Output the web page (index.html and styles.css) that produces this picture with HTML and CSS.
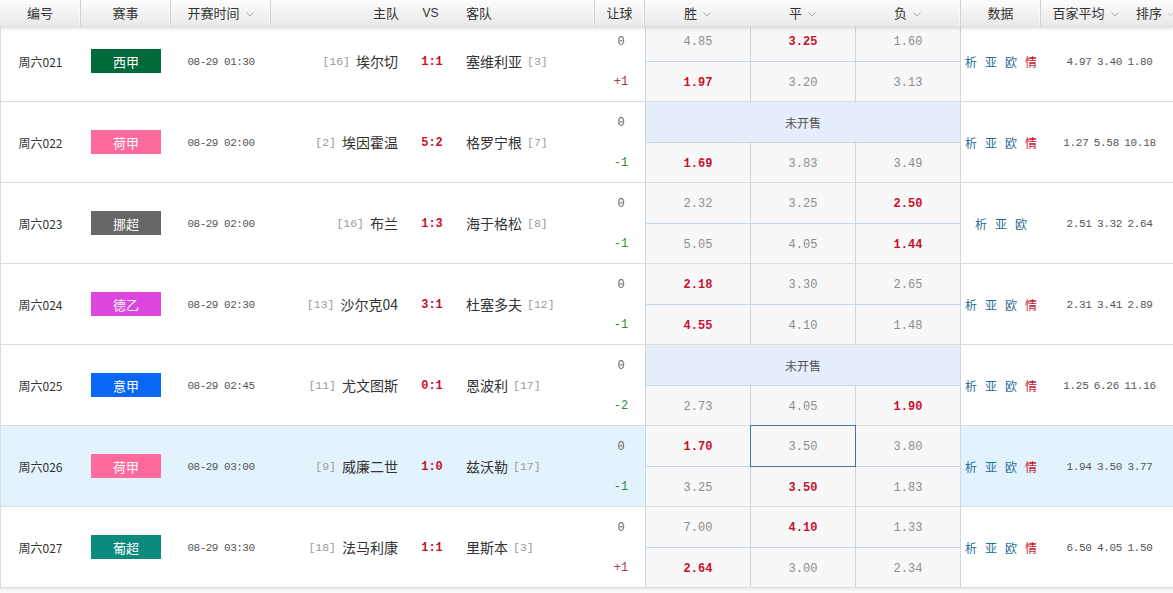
FILE: index.html
```html
<!DOCTYPE html>
<html lang="zh-CN">
<head>
<meta charset="utf-8">
<title>竞彩足球</title>
<link rel="stylesheet" href="styles.css">
</head>
<body>
<div class="table">
  <div class="head">
    <div class="hc sep">编号</div>
    <div class="hc sep">赛事</div>
    <div class="hc sep">开赛时间<svg class="chev" viewBox="0 0 8 5"><polyline points="0.5,0.5 4,4 7.5,0.5"/></svg></div>
    <div class="hc hc-home">主队</div>
    <div class="hc hc-vs">VS</div>
    <div class="hc hc-away sep">客队</div>
    <div class="hc sep">让球</div>
    <div class="hc">胜<svg class="chev" viewBox="0 0 8 5"><polyline points="0.5,0.5 4,4 7.5,0.5"/></svg></div>
    <div class="hc">平<svg class="chev" viewBox="0 0 8 5"><polyline points="0.5,0.5 4,4 7.5,0.5"/></svg></div>
    <div class="hc sep">负<svg class="chev" viewBox="0 0 8 5"><polyline points="0.5,0.5 4,4 7.5,0.5"/></svg></div>
    <div class="hc sep">数据</div>
    <div class="hc">百家平均<svg class="chev" viewBox="0 0 8 5"><polyline points="0.5,0.5 4,4 7.5,0.5"/></svg></div>
    <div class="hc hc-sort">排序<svg class="chev" viewBox="0 0 8 5"><polyline points="0.5,0.5 4,4 7.5,0.5"/></svg></div>
  </div>

  <div class="rows">
    <!-- 021 -->
    <div class="row">
      <div class="c num">周六021</div>
      <div class="c"><span class="badge b-xj">西甲</span></div>
      <div class="c time">08-29 01:30</div>
      <div class="c home"><span class="rank">[16]</span><span class="team">埃尔切</span></div>
      <div class="c score">1:1</div>
      <div class="c away"><span class="team">塞维利亚</span><span class="rank">[3]</span></div>
      <div class="c hcp"><span class="h0">0</span><span class="hp">+1</span></div>
      <div class="odds">
        <div class="o">4.85</div><div class="o hot">3.25</div><div class="o">1.60</div>
        <div class="o hot">1.97</div><div class="o">3.20</div><div class="o">3.13</div>
      </div>
      <div class="c data"><a class="lk">析</a><a class="lk">亚</a><a class="lk">欧</a><a class="lk qing">情</a></div>
      <div class="c avg">4.97 3.40 1.80</div>
    </div>
    <!-- 022 -->
    <div class="row">
      <div class="c num">周六022</div>
      <div class="c"><span class="badge b-hj">荷甲</span></div>
      <div class="c time">08-29 02:00</div>
      <div class="c home"><span class="rank">[2]</span><span class="team">埃因霍温</span></div>
      <div class="c score">5:2</div>
      <div class="c away"><span class="team">格罗宁根</span><span class="rank">[7]</span></div>
      <div class="c hcp"><span class="h0">0</span><span class="hm">-1</span></div>
      <div class="odds">
        <div class="o closed">未开售</div>
        <div class="o hot">1.69</div><div class="o">3.83</div><div class="o">3.49</div>
      </div>
      <div class="c data"><a class="lk">析</a><a class="lk">亚</a><a class="lk">欧</a><a class="lk qing">情</a></div>
      <div class="c avg">1.27 5.58 10.18</div>
    </div>
    <!-- 023 -->
    <div class="row">
      <div class="c num">周六023</div>
      <div class="c"><span class="badge b-nc">挪超</span></div>
      <div class="c time">08-29 02:00</div>
      <div class="c home"><span class="rank">[16]</span><span class="team">布兰</span></div>
      <div class="c score">1:3</div>
      <div class="c away"><span class="team">海于格松</span><span class="rank">[8]</span></div>
      <div class="c hcp"><span class="h0">0</span><span class="hm">-1</span></div>
      <div class="odds">
        <div class="o">2.32</div><div class="o">3.25</div><div class="o hot">2.50</div>
        <div class="o">5.05</div><div class="o">4.05</div><div class="o hot">1.44</div>
      </div>
      <div class="c data"><a class="lk">析</a><a class="lk">亚</a><a class="lk">欧</a></div>
      <div class="c avg">2.51 3.32 2.64</div>
    </div>
    <!-- 024 -->
    <div class="row">
      <div class="c num">周六024</div>
      <div class="c"><span class="badge b-dy">德乙</span></div>
      <div class="c time">08-29 02:30</div>
      <div class="c home"><span class="rank">[13]</span><span class="team">沙尔克04</span></div>
      <div class="c score">3:1</div>
      <div class="c away"><span class="team">杜塞多夫</span><span class="rank">[12]</span></div>
      <div class="c hcp"><span class="h0">0</span><span class="hm">-1</span></div>
      <div class="odds">
        <div class="o hot">2.18</div><div class="o">3.30</div><div class="o">2.65</div>
        <div class="o hot">4.55</div><div class="o">4.10</div><div class="o">1.48</div>
      </div>
      <div class="c data"><a class="lk">析</a><a class="lk">亚</a><a class="lk">欧</a><a class="lk qing">情</a></div>
      <div class="c avg">2.31 3.41 2.89</div>
    </div>
    <!-- 025 -->
    <div class="row">
      <div class="c num">周六025</div>
      <div class="c"><span class="badge b-yj">意甲</span></div>
      <div class="c time">08-29 02:45</div>
      <div class="c home"><span class="rank">[11]</span><span class="team">尤文图斯</span></div>
      <div class="c score">0:1</div>
      <div class="c away"><span class="team">恩波利</span><span class="rank">[17]</span></div>
      <div class="c hcp"><span class="h0">0</span><span class="hm">-2</span></div>
      <div class="odds">
        <div class="o closed">未开售</div>
        <div class="o">2.73</div><div class="o">4.05</div><div class="o hot">1.90</div>
      </div>
      <div class="c data"><a class="lk">析</a><a class="lk">亚</a><a class="lk">欧</a><a class="lk qing">情</a></div>
      <div class="c avg">1.25 6.26 11.16</div>
    </div>
    <!-- 026 -->
    <div class="row active">
      <div class="c num">周六026</div>
      <div class="c"><span class="badge b-hj">荷甲</span></div>
      <div class="c time">08-29 03:00</div>
      <div class="c home"><span class="rank">[9]</span><span class="team">威廉二世</span></div>
      <div class="c score">1:0</div>
      <div class="c away"><span class="team">兹沃勒</span><span class="rank">[17]</span></div>
      <div class="c hcp"><span class="h0">0</span><span class="hm">-1</span></div>
      <div class="odds">
        <div class="o hot">1.70</div><div class="o sel">3.50</div><div class="o">3.80</div>
        <div class="o">3.25</div><div class="o hot">3.50</div><div class="o">1.83</div>
      </div>
      <div class="c data"><a class="lk">析</a><a class="lk">亚</a><a class="lk">欧</a><a class="lk qing">情</a></div>
      <div class="c avg">1.94 3.50 3.77</div>
    </div>
    <!-- 027 -->
    <div class="row">
      <div class="c num">周六027</div>
      <div class="c"><span class="badge b-pc">葡超</span></div>
      <div class="c time">08-29 03:30</div>
      <div class="c home"><span class="rank">[18]</span><span class="team">法马利康</span></div>
      <div class="c score">1:1</div>
      <div class="c away"><span class="team">里斯本</span><span class="rank">[3]</span></div>
      <div class="c hcp"><span class="h0">0</span><span class="hp">+1</span></div>
      <div class="odds">
        <div class="o">7.00</div><div class="o hot">4.10</div><div class="o">1.33</div>
        <div class="o hot">2.64</div><div class="o">3.00</div><div class="o">2.34</div>
      </div>
      <div class="c data"><a class="lk">析</a><a class="lk">亚</a><a class="lk">欧</a><a class="lk qing">情</a></div>
      <div class="c avg">6.50 4.05 1.50</div>
    </div>
  </div>
  <div class="foot"></div>
</div>
</body>
</html>
```

FILE: styles.css
```css
html, body {
  margin: 0;
  padding: 0;
  background: #fff;
}
body {
  font-family: "Noto Sans CJK SC", "Liberation Sans", sans-serif;
  font-size: 12px;
  color: #333;
  overflow: hidden;
}
.table {
  width: 1173px;
}

/* header */
.head {
  position: relative;
  z-index: 2;
  height: 27px;
  display: grid;
  grid-template-columns: 81px 90px 100px 139px 46px 139px 50px 105px 105px 106px 80px 89px 43px;
  background: linear-gradient(#fcfcfc, #efefef 70%, #e9e9e9);
  border-bottom: 1px solid #dedede;
  box-shadow: 0 2px 3px rgba(0, 0, 0, 0.10);
  box-sizing: border-box;
}
.hc {
  display: flex;
  align-items: center;
  justify-content: center;
  font-size: 13px;
  color: #333;
  white-space: nowrap;
  box-sizing: border-box;
  padding-bottom: 1px;
}
.sep {
  border-right: 1px solid #d2d2d2;
  box-shadow: inset -1px 0 0 #fafafa;
}
.hc-home {
  justify-content: flex-end;
  padding-right: 11px;
}
.hc-vs {
  font-family: "Liberation Sans", sans-serif;
  font-size: 12px;
  padding-right: 5px;
}
.hc-away {
  justify-content: flex-start;
  padding-left: 10px;
}
.hc-sort {
  justify-content: flex-start;
  padding-left: 6px;
  overflow: hidden;
}
.chev {
  width: 8px;
  height: 5px;
  margin-left: 6px;
  margin-top: 3px;
  fill: none;
  stroke: #a8a8a8;
  stroke-width: 1;
}

/* rows */
.rows {
  margin-top: -6px;
}
.row {
  display: grid;
  grid-template-columns: 81px 90px 100px 139px 46px 139px 50px 316px 80px 132px;
  height: 81px;
  box-sizing: border-box;
  border-bottom: 1px solid #dcdcdc;
  box-shadow: inset 1px 0 0 #dcdcdc;
  background: #fff;
}
.row.active {
  background: #e3f3fd;
}
.c {
  display: flex;
  align-items: center;
  justify-content: center;
  white-space: nowrap;
}
.num {
  font-size: 12px;
  color: #333;
}
.badge {
  display: flex;
  align-items: center;
  justify-content: center;
  width: 70px;
  height: 24px;
  color: #fff;
  font-size: 13px;
}
.b-xj { background: #006a3a; }
.b-hj { background: #fe6a9b; }
.b-nc { background: #666666; }
.b-dy { background: #dd45df; }
.b-yj { background: #0a67f5; }
.b-pc { background: #0b8a7d; }

.time {
  font-family: "Liberation Mono", monospace;
  font-size: 11px;
  letter-spacing: -0.5px;
  color: #555;
  padding-top: 1px;
}
.home {
  justify-content: flex-end;
  padding-right: 12px;
}
.away {
  justify-content: flex-start;
  padding-left: 10px;
}
.rank {
  font-family: "Liberation Mono", monospace;
  font-size: 11.5px;
  color: #9a9a9a;
}
.home .rank { margin-right: 6px; }
.away .rank { margin-left: 5px; }
.team {
  font-size: 14px;
  color: #333;
}
.score {
  font-family: "Liberation Mono", monospace;
  font-size: 12px;
  font-weight: bold;
  color: #c8102e;
  padding-right: 2px;
  padding-top: 1px;
}
.hcp {
  flex-direction: column;
  font-family: "Liberation Mono", monospace;
  font-size: 12px;
}
.hcp span {
  display: flex;
  align-items: center;
  justify-content: center;
  height: 40px;
  padding-top: 2px;
  padding-left: 2px;
  box-sizing: border-box;
}
.h0 { color: #666; }
.hp { color: #a83838; }
.hm { color: #3a8a3a; }

/* odds */
.odds {
  display: grid;
  grid-template-columns: repeat(3, 104px);
  grid-template-rows: 40px 39px;
  gap: 1px;
  padding: 0 1px;
  background: #c9d6e4;
  height: 80px;
  box-sizing: border-box;
}
.o {
  display: flex;
  align-items: center;
  justify-content: center;
  background: #f8f8f8;
  font-family: "Liberation Mono", monospace;
  font-size: 12px;
  color: #8c8c8c;
  padding-top: 2px;
}
.o.hot {
  color: #c8102e;
  font-weight: bold;
}
.o.closed {
  grid-column: 1 / -1;
  background: #e5eefa;
  font-family: "Noto Sans CJK SC", sans-serif;
  color: #555;
  padding-top: 0;
}
.o.sel {
  position: relative;
  z-index: 1;
  box-shadow: 0 0 0 1px #4a7296;
}

/* data */
.data {
  gap: 8px;
}
.lk {
  font-size: 12px;
  color: #2a6d98;
  cursor: pointer;
}
.lk.qing {
  color: #c8102e;
}
.avg {
  font-family: "Liberation Mono", monospace;
  font-size: 11px;
  letter-spacing: -0.3px;
  color: #555;
  padding-left: 5px;
  padding-top: 1px;
  word-spacing: -1px;
}
.foot {
  height: 6px;
  background: linear-gradient(#eaeaea, #f7f7f7 40%, #fff);
}
```
